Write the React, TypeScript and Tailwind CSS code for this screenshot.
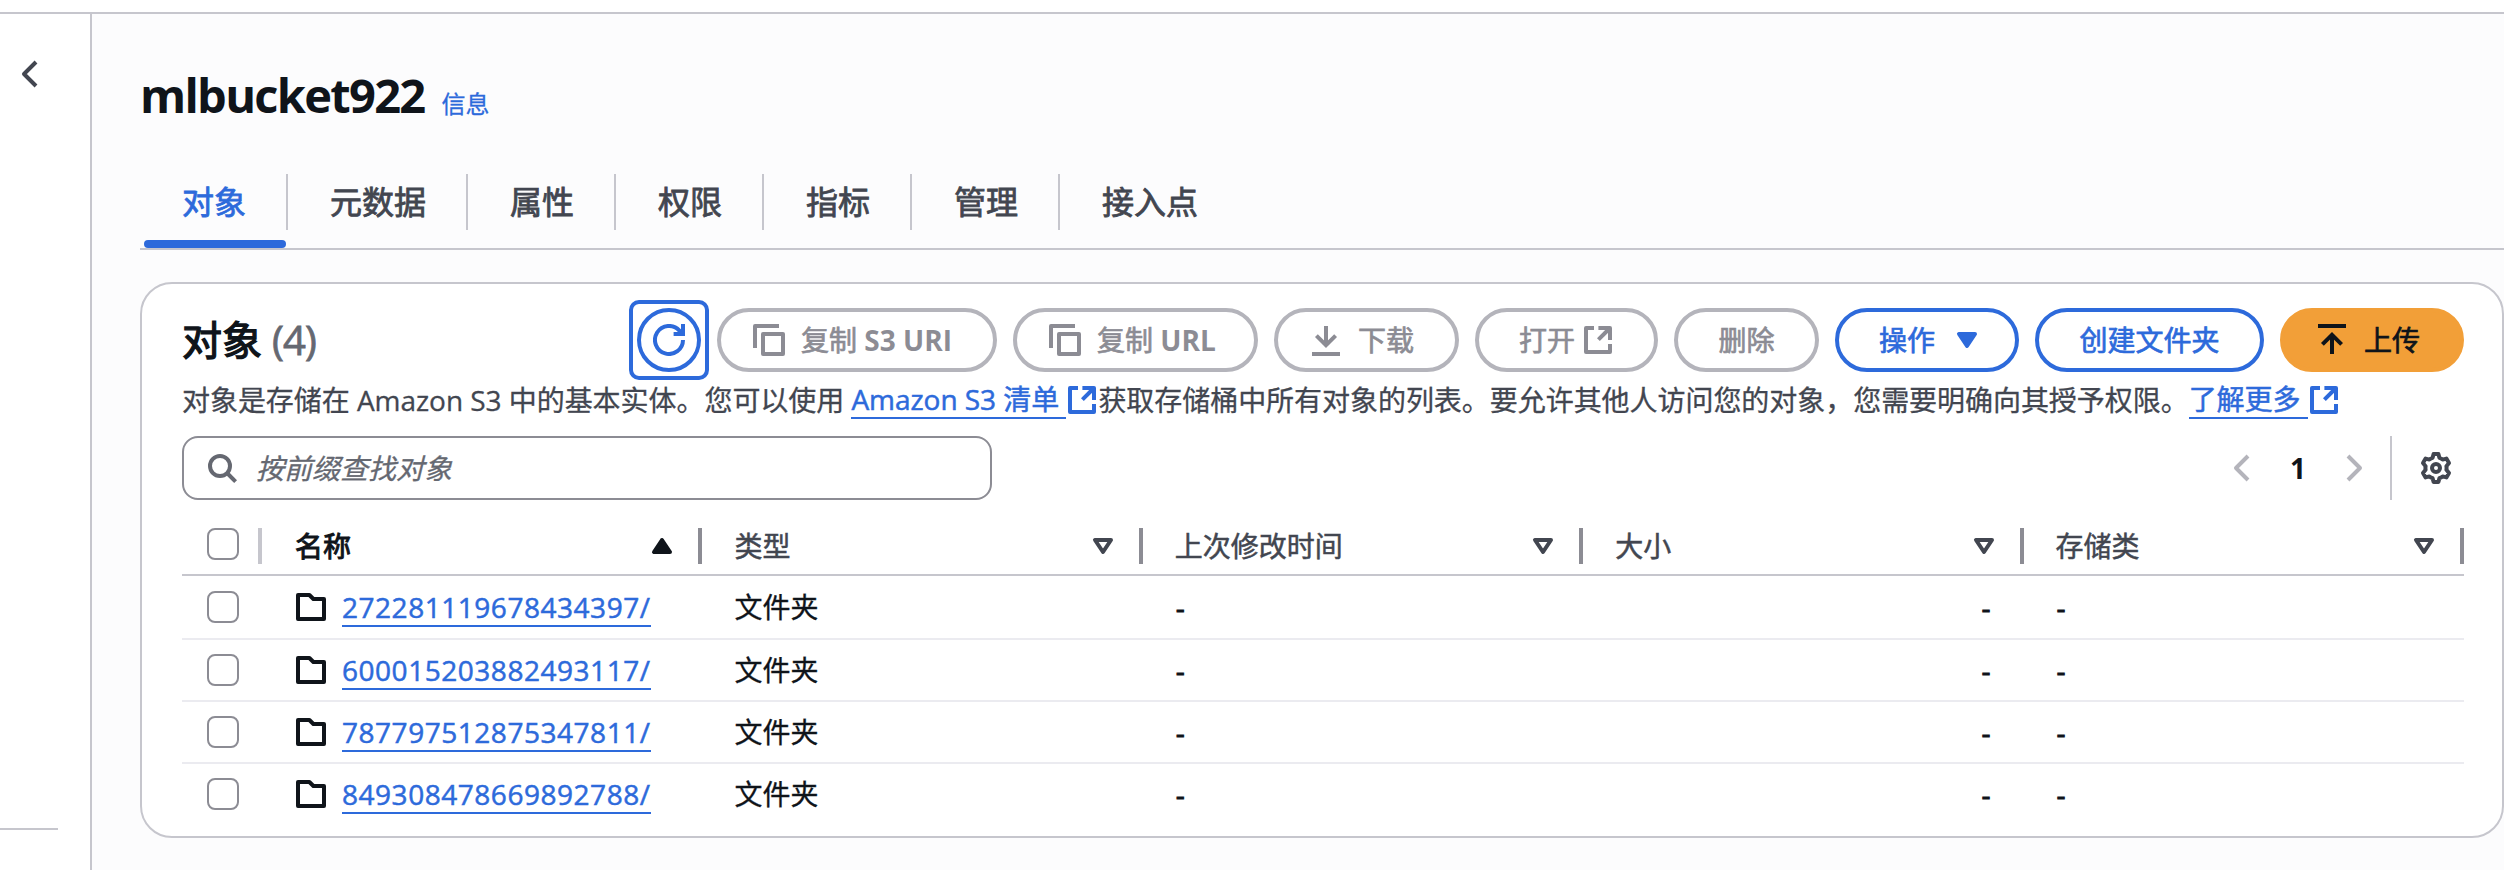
import React from 'react';

type IconProps = { d: string[]; size?: string; fill?: boolean; round?: boolean };

function Icon({ d, size = 'size-8', fill, round = true }: IconProps) {
  return (
    <svg
      viewBox="0 0 16 16"
      className={`${size} shrink-0`}
      fill={fill ? 'currentColor' : 'none'}
      stroke="currentColor"
      strokeWidth={2}
      strokeLinejoin={round ? 'round' : 'miter'}
    >
      {d.map((p) => (
        <path key={p} d={p} />
      ))}
    </svg>
  );
}

const REFRESH = ['M15 8a7 7 0 1 1-1.800-4.700L14.500 5', 'M10.300 5H15V0'];
const COPY = ['M15 5H5v10h10V5Z', 'M13 1H1v11'];
const EXTERNAL = ['M8.200 2H14v6', 'M8.200 7.800L14 2', 'M14 10v4H2V2h4'];
const DOWNLOAD = ['M8 1v9.500', 'M3.200 5.800L8 10.600l4.800-4.800', 'M1 15h14'];
const UPLOAD = ['M8 15V5.500', 'M3.200 10.200L8 5.400l4.800 4.800', 'M1 1h14'];
const LEFT = ['M11 2 5 8l6 6'];
const RIGHT = ['M5 2l6 6-6 6'];
const SEARCH = ['M7 2a5 5 0 1 0 0 10A5 5 0 1 0 7 2Z', 'M10.500 10.500l4.300 4.300'];
const FOLDER = ['M1.500 2h5.700l2 2h5.300v10h-13V2Z'];
const GEAR = [
  'M6.800 1H9.200L9.700 2.900Q10.600 3.200 11.300 3.800L13.200 3.300 14.500 5.500 13.200 7.100Q13.400 8 13.200 8.900L14.500 10.500 13.200 12.700 11.300 12.200Q10.600 12.800 9.700 13.100L9.200 15H6.800L6.300 13.100Q5.400 12.800 4.700 12.200L2.800 12.700 1.500 10.500 2.800 8.900Q2.600 8 2.800 7.100L1.500 5.500 2.800 3.300 4.700 3.800Q5.400 3.200 6.300 2.900Z',
  'M8 6a2 2 0 1 0 0 4 2 2 0 1 0 0-4Z',
];

function Button({ children, className = '' }: { children: React.ReactNode; className?: string }) {
  return (
    <button
      className={`flex h-16 shrink-0 items-center rounded-full border-4 text-[28px] whitespace-nowrap [-webkit-text-stroke:0.7px] ${className}`}
    >
      {children}
    </button>
  );
}

const DISABLED = 'border-[#b4b4bb] text-[#8c8c94]';
const PRIMARY = 'border-[#2d6adb] text-[#2d6adb]';
const LINK = 'border-b-2 border-[#2d6adb] text-[#2d6adb] [-webkit-text-stroke:0.5px]';

function Checkbox() {
  return <span className="block size-8 shrink-0 rounded-[8px] border-2 border-[#8c8c94] bg-white" />;
}

function Latin({ children }: { children: React.ReactNode }) {
  return <span className="font-bold [-webkit-text-stroke:0px]">{children}</span>;
}

const TABS = ['元数据', '属性', '权限', '指标', '管理', '接入点'];
const COLUMNS = ['类型', '上次修改时间', '大小', '存储类'];
const ROWS = ['272281119678434397/', '600015203882493117/', '787797512875347811/', '849308478669892788/'];
const GRID = 'grid grid-cols-[80px_repeat(5,1fr)]';

export default function App() {
  return (
    <div className="flex h-[870px] w-[2504px] flex-col overflow-hidden bg-white pt-3 font-['Open_Sans','Noto_Sans_CJK_SC',sans-serif] text-[28px] text-[#0f141a]">
      <div className="flex flex-1 border-t-2 border-[#c6c6cd]">
        <aside className="flex w-[92px] shrink-0 flex-col justify-between border-r-2 border-[#c6c6cd] pt-11 pb-10">
          <span className="pl-[14px] text-[#424650]">
            <Icon d={LEFT} />
          </span>
          <span className="h-0.5 w-[58px] bg-[#c6c6cd]" />
        </aside>
        <main className="flex flex-1 flex-col bg-[#fcfcfd] pl-12">
          <div className="flex h-[160px] items-baseline pt-[48px]">
            <h1 className="text-[47px] leading-[66px] font-bold tracking-[-1.7px]">mlbucket922</h1>
            <a className="ml-[17px] text-[24px] text-[#2d6adb] [-webkit-text-stroke:0.3px]">信息</a>
          </div>
          <nav className="flex h-[76px] border-b-2 border-[#c6c6cd] text-[32px] leading-[56px] text-[#424650] [-webkit-text-stroke:0.8px]">
            <div className="flex flex-col text-[#2d6adb]">
              <div className="h-14 border-r-2 border-[#c6c6cd] pr-10 pl-[42px]">对象</div>
              <div className="mt-[10px] mr-0.5 ml-1 h-2 rounded-full bg-[#2d6adb]" />
            </div>
            {TABS.map((t, i) => (
              <div key={t} className={`h-14 pr-10 pl-[42px] ${i < TABS.length - 1 ? 'border-r-2 border-[#c6c6cd]' : ''}`}>
                {t}
              </div>
            ))}
          </nav>

          <section className="mt-8 flex h-[556px] flex-col rounded-[32px] border-2 border-[#c6c6cd] bg-white pr-[38px] pl-10">
            <div className="flex h-[96px] items-center justify-between pt-4">
              <h2 className="text-[40px] [-webkit-text-stroke:1.3px]">
                对象
                <span className="ml-[10px] tracking-[-0.8px] text-[#656871] [-webkit-text-stroke:0.8px]">(4)</span>
              </h2>
              <div className="flex gap-4">
                <div className="-m-2 rounded-[10px] border-4 border-[#2d6adb] p-1">
                  <Button className={`w-16 justify-center ${PRIMARY}`}>
                    <Icon d={REFRESH} round={false} />
                  </Button>
                </div>
                <Button className={`w-[280px] gap-4 pl-8 ${DISABLED}`}>
                  <Icon d={COPY} />
                  <span>
                    复制 <Latin>S3 URI</Latin>
                  </span>
                </Button>
                <Button className={`w-[245px] gap-4 pl-8 ${DISABLED}`}>
                  <Icon d={COPY} />
                  <span>
                    复制 <Latin>URL</Latin>
                  </span>
                </Button>
                <Button className={`w-[185px] gap-4 pl-8 ${DISABLED}`}>
                  <Icon d={DOWNLOAD} round={false} />
                  下载
                </Button>
                <Button className={`w-[183px] gap-[7px] pl-10 ${DISABLED}`}>
                  打开
                  <Icon d={EXTERNAL} />
                </Button>
                <Button className={`w-[145px] justify-center ${DISABLED}`}>删除</Button>
                <Button className={`w-[184px] gap-4 pl-10 ${PRIMARY}`}>
                  操作
                  <Icon d={['M4 5h8l-4 6-4-6Z']} fill />
                </Button>
                <Button className={`w-[229px] justify-center ${PRIMARY}`}>创建文件夹</Button>
                <Button className="w-[184px] gap-4 border-[#f29f38] bg-[#f29f38] pl-8">
                  <Icon d={UPLOAD} round={false} />
                  上传
                </Button>
              </div>
            </div>
            <p className="flex h-10 items-center tracking-[-0.045px] whitespace-pre text-[#424650] [-webkit-text-stroke:0.3px]">
              对象是存储在 Amazon S3 中的基本实体。您可以使用{' '}
              <a className={`leading-9 ${LINK}`}>Amazon S3 清单 </a>
              <span className="text-[#2d6adb]">
                <Icon d={EXTERNAL} />
              </span>
              获取存储桶中所有对象的列表。要允许其他人访问您的对象，您需要明确向其授予权限。
              <a className={`leading-9 ${LINK}`}>了解更多 </a>
              <span className="text-[#2d6adb]">
                <Icon d={EXTERNAL} />
              </span>
            </p>
            <div className="mt-4 flex h-16 items-center justify-between">
              <div className="flex h-16 w-[810px] items-center rounded-[16px] border-2 border-[#8c8c94] pl-[22px] text-[#656871]">
                <Icon d={SEARCH} />
                <span className="ml-[18px] italic [-webkit-text-stroke:0.3px]">按前缀查找对象</span>
              </div>
              <div className="flex h-16 items-center text-[#b4b4bb]">
                <Icon d={LEFT} />
                <span className="w-[80px] text-center text-[28px] font-bold text-[#0f141a]">1</span>
                <Icon d={RIGHT} />
                <span className="ml-5 h-16 w-0.5 bg-[#c6c6cd]" />
                <span className="mr-3 ml-7 text-[#424650]">
                  <Icon d={GEAR} />
                </span>
              </div>
            </div>

            <div className={`${GRID} mt-6 h-[52px] border-b-2 border-[#c6c6cd] pt-1 text-[#424650] [-webkit-text-stroke:0.5px]`}>
              <div className="flex h-9 justify-between pl-[25px]">
                <Checkbox />
                <span className="h-9 w-1 bg-[#c6c6cd]" />
              </div>
              <div className="flex h-9 items-center justify-between pl-[33px] text-[#0f141a] [-webkit-text-stroke:1px]">
                名称
                <span className="flex items-center gap-5">
                  <Icon d={['M4 11h8L8 5l-4 6Z']} fill />
                  <span className="h-9 w-1 bg-[#8c8c94]" />
                </span>
              </div>
              {COLUMNS.map((c) => (
                <div key={c} className="flex h-9 items-center justify-between pl-8">
                  {c}
                  <span className="flex items-center gap-5">
                    <Icon d={['M4 5h8l-4 6-4-6Z']} />
                    <span className="h-9 w-1 bg-[#8c8c94]" />
                  </span>
                </div>
              ))}
            </div>
            {ROWS.map((r, i) => (
              <div
                key={r}
                className={`${GRID} items-center [-webkit-text-stroke:0.3px] ${i === 0 ? 'h-16' : i === 3 ? 'h-[60px]' : 'h-[62px]'} ${i < 3 ? 'border-b-2 border-[#ebebf0]' : ''}`}
              >
                <div className="pl-[25px]">
                  <Checkbox />
                </div>
                <div className="flex items-center gap-[15px] pl-[33px]">
                  <Icon d={FOLDER} />
                  <a className={`mt-[2px] leading-9 tracking-[0.53px] ${LINK}`}>{r}</a>
                </div>
                <div className="pl-8">文件夹</div>
                <div className="pl-[33px] [-webkit-text-stroke:0.8px]">-</div>
                <div className="pr-[33px] text-right [-webkit-text-stroke:0.8px]">-</div>
                <div className="pl-[33px] [-webkit-text-stroke:0.8px]">-</div>
              </div>
            ))}
          </section>
        </main>
      </div>
    </div>
  );
}
